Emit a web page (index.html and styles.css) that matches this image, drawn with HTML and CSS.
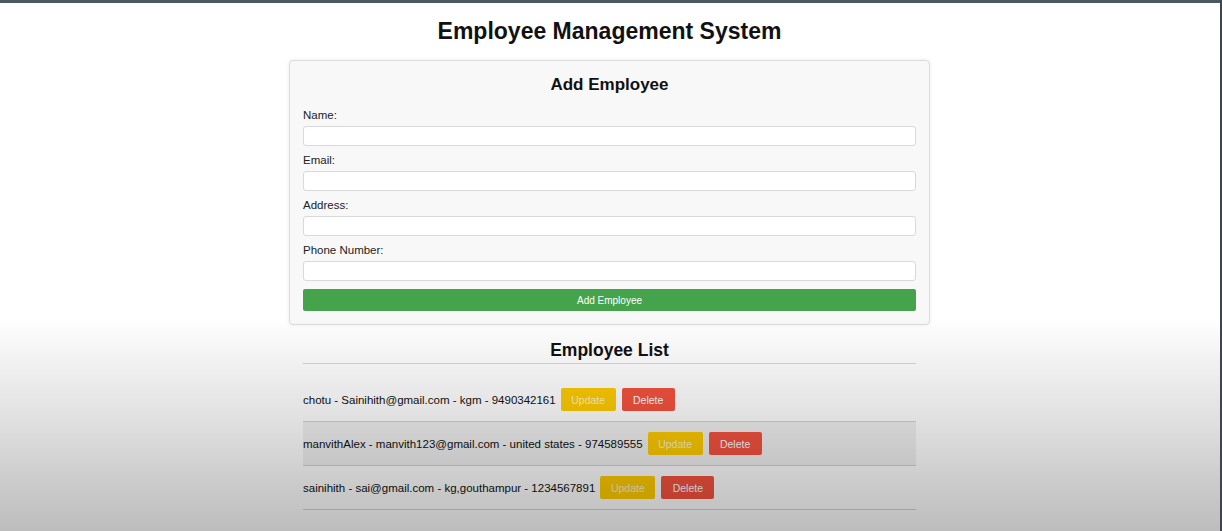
FILE: index.html
```html
<!DOCTYPE html>
<html lang="en">
<head>
<meta charset="utf-8">
<title>Employee Management System</title>
<link rel="stylesheet" href="styles.css">
</head>
<body>
<div class="shade"></div>
<main class="container">
  <h1 class="title">Employee Management System</h1>
  <form class="card">
    <h2 class="card-title">Add Employee</h2>
    <label class="label">Name:</label>
    <input class="input" type="text">
    <label class="label">Email:</label>
    <input class="input" type="text">
    <label class="label">Address:</label>
    <input class="input" type="text">
    <label class="label">Phone Number:</label>
    <input class="input" type="text">
    <button class="btn-add" type="button">Add Employee</button>
  </form>
  <section class="list">
    <h2 class="list-title">Employee List</h2>
    <ul class="rows">
      <li class="row"><span class="row-text">chotu - Sainihith@gmail.com - kgm - 9490342161</span><button class="btn btn-update" type="button">Update</button><button class="btn btn-delete" type="button">Delete</button></li>
      <li class="row"><span class="row-text">manvithAlex - manvith123@gmail.com - united states - 974589555</span><button class="btn btn-update" type="button">Update</button><button class="btn btn-delete" type="button">Delete</button></li>
      <li class="row"><span class="row-text">sainihith - sai@gmail.com - kg,gouthampur - 1234567891</span><button class="btn btn-update" type="button">Update</button><button class="btn btn-delete" type="button">Delete</button></li>
    </ul>
  </section>
</main>
</body>
</html>
```
FILE: styles.css
```css
* { box-sizing: border-box; }
html, body { height: 100%; }
body {
  margin: 0;
  padding-right: 3px;
  background: #ffffff;
  border-top: 3px solid #4a5864;
  font-family: "Liberation Sans", Arial, sans-serif;
  color: #111;
  overflow: hidden;
}
.shade {
  position: fixed;
  inset: 0;
  pointer-events: none;
  z-index: 10;
  border-right: 2px solid #3c464f;
  background: linear-gradient(to bottom,
    rgba(0,0,0,0) 0,
    rgba(0,0,0,0) 318px,
    rgba(0,0,0,0.06) 365px,
    rgba(0,0,0,0.12) 420px,
    rgba(0,0,0,0.20) 480px,
    rgba(0,0,0,0.26) 531px);
}
.container {
  width: 641px;
  margin: 0 auto;
}
.title {
  margin: 15px 0 16px;
  font-size: 23px;
  line-height: 26px;
  font-weight: bold;
  text-align: center;
}
.card {
  display: flex;
  flex-direction: column;
  background: #f8f8f8;
  border: 1px solid #dcdcdc;
  border-radius: 4px;
  box-shadow: 0 0 4px rgba(0,0,0,0.08);
  padding: 13px 13px 13px;
}
.card-title {
  margin: 0 0 12px;
  font-size: 17px;
  line-height: 22px;
  font-weight: bold;
  text-align: center;
}
.label {
  display: block;
  font-size: 11.5px;
  line-height: 14px;
  margin-bottom: 4px;
  color: #222;
}
.input {
  height: 20px;
  margin: 0 0 7px;
  border: 1px solid #d9d9d9;
  border-radius: 3px;
  background: #fff;
}
.btn-add {
  margin-top: 1px;
  height: 22px;
  border: 0;
  border-radius: 2px;
  background: #45a34c;
  color: #fff;
  font-family: inherit;
  font-size: 10px;
}
.list {
  margin: 14px 14px 0;
}
.list-title {
  margin: 0;
  padding-bottom: 2px;
  border-bottom: 1px solid #d8d8d8;
  font-size: 17.5px;
  line-height: 22px;
  text-align: center;
}
.rows {
  list-style: none;
  margin: 14px 0 0;
  padding: 0;
}
.row {
  display: flex;
  align-items: center;
  height: 44px;
  border-bottom: 1px solid #d4d4d4;
  font-size: 11.5px;
}
.row:nth-child(even) { background: #f1f1f1; }
.row-text { margin-right: 5px; }
.btn {
  height: 23px;
  padding: 0 10px;
  border: 0;
  border-radius: 2px;
  color: #fff;
  font-family: inherit;
  font-size: 10.5px;
  margin-right: 6px;
}
.btn-update { background: #ffcc00; color: #fdf3c8; width: 55px; }
.btn-delete { background: #f5533f; width: 53px; }
```
